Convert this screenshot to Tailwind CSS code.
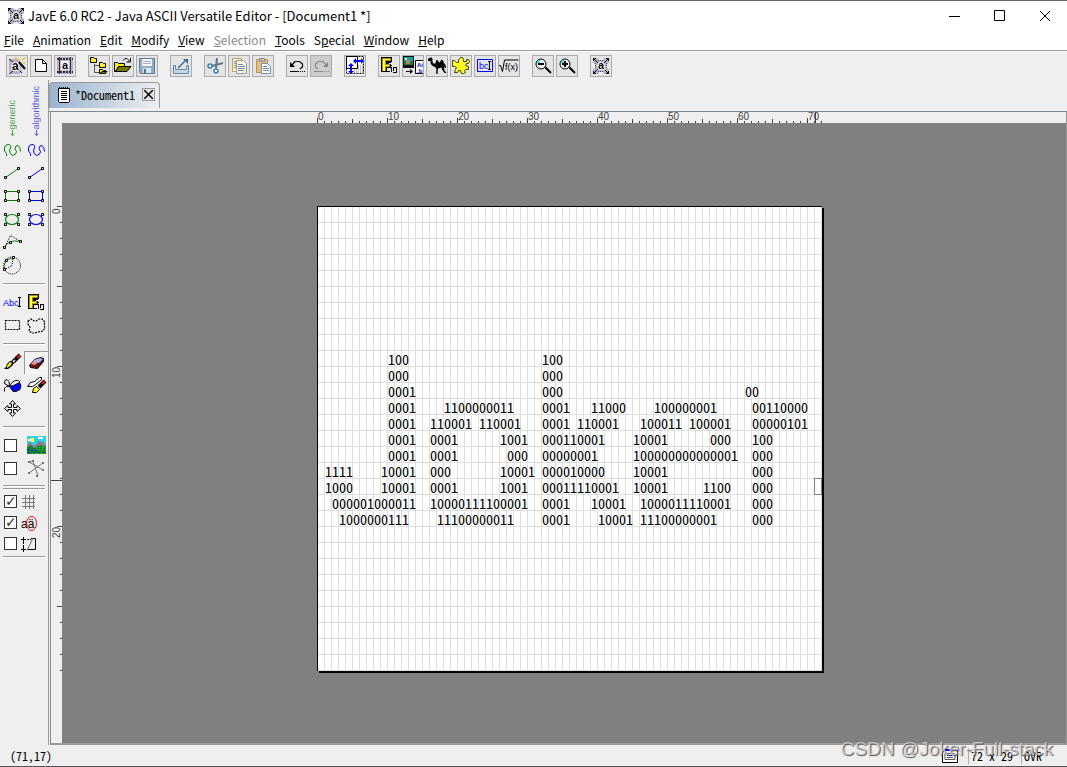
<!DOCTYPE html>
<html lang="en">
<head>
<meta charset="utf-8">
<title>JavE 6.0 RC2</title>
<script src="https://cdn.jsdelivr.net/npm/@tailwindcss/browser@4"></script>
</head>
<body class="flex h-screen flex-col overflow-hidden border-t border-[#666] bg-[#efefef] font-['Noto_Sans_CJK_SC','Noto_Sans',sans-serif] text-black">
<svg class="hidden">
  <symbol id="logo" viewBox="0 0 16 16">
    <path fill="#b7aecb" d="M0 0h16v16H0z"/><path fill="#eee" d="M5 0h6l-1 2H6zM5 16h6l-1-2H6zM0 5l2 1v4l-2 1zM16 5l-2 1v4l2 1z"/>
    <path stroke="#111" fill="none" d="M0 .5h3M.5 0v3M1 1l4 4M16 .5h-3M15.500 0v3M15 1l-4 4M0 15.500h3M.5 16v-3M1 15l4-4M16 15.500h-3M15.500 16v-3M15 15l-4-4"/>
    <path stroke="#555" stroke-dasharray="1 1" d="M5 2.500h6M5 13.500h6M2.500 5v6M13.500 5v6"/>
    <text x="5" y="11" font-family="Liberation Sans" font-weight="bold" font-size="11" stroke="#fff" stroke-width="2" paint-order="stroke">a</text>
  </symbol>
  <symbol id="fig" viewBox="0 0 20 20">
    <g shape-rendering="crispEdges"><path fill="#000" d="M2 1h11v5h-1v1h-2v1h2v4H8v4H2z"/><path fill="#aa8f00" d="M3 2h9v3H7v3h4v3H7v4H3z"/><path fill="#ff4" d="M5 3h6v1H6v5h4v1H6v5H4V3z"/>
    <path fill="#000" d="M8 15h3v1H8zM12 9h1v1h-1zM12 11h1v5h-1zM14 11h4v1h-3v3h2v-3h1v5h-4v-1h3v-1h-3z"/></g>
  </symbol>
  <symbol id="curve" viewBox="0 0 24 23"><path fill="none" stroke="currentColor" d="M6.500 17V14.500L4.500 12V9Q5 5.500 8 5.500Q11.500 5.500 10.500 9L9.500 11Q9.500 15.500 12.500 16.500Q16.500 16 16.500 12.500L15 9.500Q15.500 6 18 6.500Q20.500 8 20.500 12.500"/></symbol>
  <symbol id="line" viewBox="0 0 24 23"><path stroke="currentColor" d="M5.500 15.500L18.500 6.500"/><path fill="#fff" stroke="#000" d="M4.500 14.500h2v2h-2zM17.500 5.500h2v2h-2z"/></symbol>
  <symbol id="rect" viewBox="0 0 24 23"><path fill="none" stroke="currentColor" d="M5.500 6.500h13v9h-13z"/><path fill="#fff" stroke="#000" d="M4.500 5.500h2v2h-2zM17.500 5.500h2v2h-2zM4.500 14.500h2v2h-2zM17.500 14.500h2v2h-2z"/></symbol>
  <symbol id="oval" viewBox="0 0 24 23"><ellipse cx="12" cy="11.500" rx="6.500" ry="5" fill="none" stroke="currentColor" stroke-width="1.200"/><path fill="#fff" stroke="#000" d="M4.500 5.500h2v2h-2zM17.500 5.500h2v2h-2zM4.500 15.500h2v2h-2zM17.500 15.500h2v2h-2z"/></symbol>
  <symbol id="brush" viewBox="0 0 24 23"><path fill="#000" d="M4 18l2-2 1-3 3-3h3l1 2-2 3-4 3z"/><path fill="#ff2" d="M7 15l3-4 2 1-2 3-3 2z"/><path stroke="#000" stroke-width="4" d="M13 11l7-7"/><path stroke="#d22" stroke-width="2" d="M17 7l3-3"/><path stroke="#ccc" stroke-width="2" d="M13 11l2-2"/></symbol>
</svg>

<header class="shrink-0 bg-white">
  <div class="flex h-[30px] items-center pl-2">
    <svg class="size-4" viewBox="0 0 16 16"><use href="#logo"/></svg>
    <h1 class="ml-1 grow text-[13px] leading-5">JavE 6.0 RC2 - Java ASCII Versatile Editor - [Document1 *]</h1>
    <button aria-label="Minimize" class="grid h-full w-[45px] place-items-center"><svg width="12" height="12"><path stroke="#000" d="M0 6.500h11"/></svg></button>
    <button aria-label="Maximize" class="grid h-full w-[45px] place-items-center"><svg width="12" height="12"><path fill="none" stroke="#000" d="M.5 .5h10v10H.5z"/></svg></button>
    <button aria-label="Close" class="grid h-full w-[45px] place-items-center"><svg width="12" height="12"><path stroke="#000" d="M1 1l10 10M11 1L1 11"/></svg></button>
  </div>
  <nav class="flex h-5 items-center gap-[9px] border-b border-[#999] pb-px pl-1 text-xs leading-[18px]">
    <button><u>F</u>ile</button><button><u>A</u>nimation</button><button><u>E</u>dit</button><button><u>M</u>odify</button><button><u>V</u>iew</button><button disabled class="text-[#888]"><u>S</u>election</button><button><u>T</u>ools</button><button>S<u>p</u>ecial</button><button><u>W</u>indow</button><button><u>H</u>elp</button>
  </nav>
</header>

<div class="flex h-[29px] shrink-0 items-center gap-3 border-t border-white pl-1.5 [&_button]:size-[22px] [&_button]:border [&_button]:border-[#aaa] [&_button]:bg-[#e4e4e4] [&_svg]:size-5 [&>div]:flex [&>div]:gap-0.5" role="toolbar">
  <div>
    <button aria-label="Wizard"><svg viewBox="0 0 20 20"><path fill="#b7aecb" d="M2 3h9l3 5 1 9-4 1H3l-1-4z"/><path stroke="#222" d="M2 3l4 3M2 18l4-3M15 17l-3-3" /><text x="5" y="14" font-family="Liberation Sans" font-weight="bold" font-size="12" stroke="#fff" stroke-width="2" paint-order="stroke">a</text><path stroke="#000" stroke-width="2" d="M12 6l6 7"/><path stroke="#e8c020" stroke-width="1.500" d="M11 3l1 2M15 4l3-2M8 2l2 1M16 7h2"/></svg></button>
    <button aria-label="New"><svg viewBox="0 0 20 20"><path fill="#fff" stroke="#000" d="M4.500 3.500h7l4 4v8h-11z"/><path fill="none" stroke="#000" d="M11.500 3.500v4h4"/></svg></button>
    <button aria-label="New animation"><svg viewBox="0 0 20 20"><path fill="#b7aecb" d="M2 1h16v17H2z"/><path stroke="#333" stroke-width="2" stroke-dasharray="2 1" d="M2 3h16M2 16h16"/><path stroke="#333" d="M4.500 1v17M15.500 1v17"/><path fill="#fff" d="M6 5h8v9H6z"/><text x="7" y="13" font-family="Liberation Sans" font-weight="bold" font-size="11">a</text></svg></button>
  </div>
  <div>
    <button aria-label="Browse"><svg viewBox="0 0 20 20"><path fill="none" stroke="#555" d="M5.500 8v8.500H11M5.500 9.500H11"/><path fill="#ffef20" stroke="#000" d="M1.500 1.500h3l1 1h2v4h-6zM10.500 6.500h3l1 1h2v4h-6zM10.500 13.500h3l1 1h2v3h-6z"/><path fill="#777700" stroke="#000" d="M11 17.500l2-2h5l-2 2z"/></svg></button>
    <button aria-label="Open"><svg viewBox="0 0 20 20"><path fill="#ffef20" stroke="#000" d="M1.500 15.500v-9h3l1 1h6v3h-6l-3 5z"/><path fill="#777700" stroke="#000" d="M2 15.500l4-5h12l-4 5z"/><path fill="none" stroke="#000" d="M10 4.500l2-2h2l3 3M17.500 2v4h-4"/></svg></button>
    <button aria-label="Save"><svg viewBox="0 0 20 20"><path fill="#91aac6" stroke="#5d7c9d" d="M2.500 2.500h15v15h-14l-1-1z"/><path fill="#f4f7fa" d="M5 3h10v7H5z"/><path fill="#dce5ed" d="M6 12h8v5H6z"/><path fill="#527294" d="M7 13h2v4H7z"/><path stroke="#aac" d="M6 5.500h8M6 7.500h8"/></svg></button>
  </div>
  <div>
    <button aria-label="Export"><svg viewBox="0 0 20 20"><path fill="#c4d8ea" stroke="#628ab3" d="M2.500 9.500v8h15v-8h-2v4h-11v-4z"/><path fill="none" stroke="#356b9d" stroke-width="1.500" d="M7 12l7-7"/><path fill="#356b9d" d="M12 3h5v5z"/></svg></button>
  </div>
  <div>
    <button aria-label="Cut"><svg viewBox="0 0 20 20"><path stroke="#64788c" stroke-width="2" d="M12 2l-1 10M18 7l-11 3"/><circle cx="5" cy="10" r="2" fill="#fff" stroke="#3b7bb5" stroke-width="1.500"/><circle cx="11" cy="15" r="2" fill="#fff" stroke="#3b7bb5" stroke-width="1.500"/></svg></button>
    <button aria-label="Copy"><svg viewBox="0 0 20 20"><path fill="#fff5c8" stroke="#b8a268" d="M3.500 2.500h9v13h-9z"/><path fill="#fff8d8" stroke="#8b9db3" d="M7.500 4.500h7l3 3v10h-10z"/><path stroke="#758cab" d="M9 8.500h5M9 10.500h7M9 12.500h7M9 14.500h6M5 5.500h2M5 7.500h2M5 9.500h2M5 11.500h2"/></svg></button>
    <button aria-label="Paste"><svg viewBox="0 0 20 20"><path fill="#e7bd7a" stroke="#bd9150" d="M3.500 3.500h11v13h-11z"/><path fill="#b9bdc3" stroke="#878d95" d="M6.500 2.500h5v3h-5z"/><path fill="#fff" stroke="#7890ad" d="M8.500 7.500h6l3 3v7h-9z"/><path stroke="#758cab" d="M10 10.500h4M10 12.500h6M10 14.500h6"/></svg></button>
  </div>
  <div>
    <button aria-label="Undo"><svg viewBox="0 0 20 20"><path fill="none" stroke="#000" stroke-width="1.200" d="M5 9L8 5.500h4.500L15.500 8v3L13 13"/><path d="M3 6v5h5z"/><path stroke="#000" d="M3 15.500h9M13 15.500h1M15 15.500h1M17 15.500h1"/></svg></button>
    <button disabled aria-label="Redo" class="bg-[#ccc]!"><svg viewBox="0 0 20 20"><path fill="none" stroke="#888" stroke-width="1.200" d="M15 9L12 5.500H7.500L4.500 8v3L7 13"/><path fill="#888" d="M17 6v5h-5z"/><path stroke="#888" d="M3 15.500h9M13 15.500h1M15 15.500h1M17 15.500h1"/></svg></button>
  </div>
  <div>
    <button aria-label="Resize"><svg viewBox="0 0 20 20"><path fill="#fff" d="M1 0h18v19H1z"/><path stroke="#bbb" stroke-width="4" stroke-dasharray="1 1" d="M13 11h5M9 15h9"/><path fill="none" stroke="#000" stroke-dasharray="2 1" d="M1.500 .5h17v17h-17z"/><path fill="none" stroke="#000" d="M1.500 .5h11v12h-11z"/><path stroke="#00f" stroke-width="2" d="M10 5h7M6 9v7"/><path fill="#00f" d="M8 5l3-3v6zM19 5l-3-3v6zM6 7l-3 3h6zM6 18l-3-3h6z"/></svg></button>
  </div>
  <div>
    <button aria-label="Figlet"><svg><use href="#fig"/></svg></button>
    <button aria-label="Image to ASCII"><svg viewBox="0 0 20 20"><path fill="#111" d="M0 0h11v12H0z"/><path fill="#18a0b0" d="M1 1h9v4H1z"/><path fill="#287830" d="M1 5h9v4H1z"/><path fill="#9a8a78" d="M3 4h4v4H3z"/><path fill="#ee4" d="M2 2h2v2H2z"/><path stroke="#000" d="M3 15.500h4"/><path d="M7 13v5l3-2.500z"/><path fill="#fff" stroke="#000" d="M20 4.500h-7.500v13H20"/><text x="14" y="11" font-family="Liberation Sans" font-weight="bold" font-size="6" fill="#00f">Ai</text><text x="14" y="17" font-family="Liberation Sans" font-weight="bold" font-size="6" fill="#00f">.b</text></svg></button>
    <button aria-label="Camel"><svg viewBox="0 0 20 20"><path d="M1 3L2 2H3L4 1 5.500 3 5.500 6 7 8 8.500 7 9.500 4 10.500 4 12 6.500 13 6 14.500 3.500 16 4.500 17 7 18.500 9 19 12H18V10.500L17 12 17.500 14.500 19.500 17H17.500L15 13.500 14.500 11.500 11 12.500 10.500 16.500 11.500 17.500H9L9.500 13 8 11 5 9.500 3.500 7 3.500 5H1z"/></svg></button>
    <button aria-label="Puzzle"><svg viewBox="0 0 20 20"><path fill="#ff2" stroke="#443c00" d="M1.500 4.500h2l2 2h2v-3l2-2h2l1 2v2h3v-2h2l1 2-1 2h-2l-1 2 3 1v3h-3l-1 1 1 2-2 1h-2l-1-3h-2l-1 2h-3l1-3 1-2-2-1h-2z"/></svg></button>
    <button aria-label="Text box"><svg viewBox="0 0 20 20"><path fill="#e4e4e4" stroke="#00f" d="M2.500 3.500h15v12h-15z"/><text x="4" y="13" font-family="Liberation Sans" font-size="9" fill="#00f">bc</text><path stroke="#000" d="M14.500 5v9M13 5.500h1M15 5.500h1M13 13.500h1M15 13.500h1"/></svg></button>
    <button aria-label="Formula"><svg viewBox="0 0 20 20"><path fill="none" stroke="#000" d="M0 9.500h1.500l2 6 2-11.500h14"/><text x="6" y="14" font-family="Liberation Sans" font-size="9">f(x)</text></svg></button>
  </div>
  <div>
    <button aria-label="Zoom out"><svg viewBox="0 0 20 20"><path stroke="#000" stroke-width="2" d="M12 11l6 6"/><circle cx="8" cy="8" r="5" fill="#efefef" stroke="#000"/><path stroke="#0dd" stroke-width="1.500" d="M4.500 7L7 4.500"/><path stroke="#000" stroke-width="2" d="M5 8h6"/></svg></button>
    <button aria-label="Zoom in"><svg viewBox="0 0 20 20"><path stroke="#000" stroke-width="2" d="M12 11l6 6"/><circle cx="8" cy="8" r="5" fill="#efefef" stroke="#000"/><path stroke="#0dd" stroke-width="1.500" d="M4.500 7L7 4.500"/><path stroke="#000" stroke-width="2" d="M5 8h6M8 5v6"/></svg></button>
  </div>
  <div>
    <button aria-label="About" class="grid place-items-center"><svg class="size-4!"><use href="#logo"/></svg></button>
  </div>
</div>

<main class="flex min-h-0 grow">
  <aside class="flex w-12 shrink-0 flex-col [&_.icons]:grid [&_.icons]:auto-rows-[23px] [&_.icons]:grid-cols-2 [&_button]:size-full [&_svg]:h-[23px] [&_svg]:w-6 [&_hr]:mx-[3px] [&_hr]:h-0.5 [&_hr]:border-t [&_hr]:border-[#999] [&_hr]:bg-white">
    <div class="grid h-[59px] shrink-0 grid-cols-2 pb-0.5 font-['Liberation_Sans',sans-serif] text-[9px] leading-3">
      <div class="flex flex-col items-center justify-end text-[#4ba54b]"><span class="rotate-180 [writing-mode:vertical-rl]">generic</span><svg class="h-[7px]! w-[5px]! shrink-0"><path fill="none" stroke="currentColor" d="M2.500 0v6M.5 3.500l2 2 2-2"/></svg></div>
      <div class="flex flex-col items-center justify-end text-[#5a5ae0]"><span class="rotate-180 [writing-mode:vertical-rl]">algorithmic</span><svg class="h-[7px]! w-[5px]! shrink-0"><path fill="none" stroke="currentColor" d="M2.500 0v6M.5 3.500l2 2 2-2"/></svg></div>
    </div>
    <div class="icons">
      <button aria-label="Generic curve" class="text-[#008000]"><svg><use href="#curve"/></svg></button><button aria-label="Algorithmic curve" class="text-[#00f]"><svg><use href="#curve"/></svg></button>
      <button aria-label="Generic line" class="text-[#008000]"><svg><use href="#line"/></svg></button><button aria-label="Algorithmic line" class="text-[#00f]"><svg><use href="#line"/></svg></button>
      <button aria-label="Generic rectangle" class="text-[#008000]"><svg><use href="#rect"/></svg></button><button aria-label="Algorithmic rectangle" class="text-[#00f]"><svg><use href="#rect"/></svg></button>
      <button aria-label="Generic ellipse" class="text-[#008000]"><svg><use href="#oval"/></svg></button><button aria-label="Algorithmic ellipse" class="text-[#00f]"><svg><use href="#oval"/></svg></button>
      <button aria-label="Bezier" class="col-start-1"><svg viewBox="0 0 24 23"><path fill="none" stroke="#000" stroke-dasharray="1 1" d="M4.500 16.500l6-12 10 6"/><path fill="none" stroke="#008000" d="M4.500 16.500Q8 8 20.500 10.500"/><path fill="#fff" stroke="#000" d="M3.500 15.500h2v2h-2zM9.500 10.500h2v2h-2zM19.500 9.500h2v2h-2z"/></svg></button>
      <button aria-label="Arc" class="col-start-1"><svg viewBox="0 0 24 23"><circle cx="12" cy="11.500" r="8.500" fill="none" stroke="#000" stroke-dasharray="1 1"/><path fill="none" stroke="#000" stroke-dasharray="1 1" d="M4.500 15.500L12 11.500l1-8"/><path fill="none" stroke="#008000" d="M4.500 15.500Q2 7 13 3.500"/><path fill="#fff" stroke="#000" d="M3.500 14.500h2v2h-2zM5.500 5.500h2v2h-2zM12.500 2.500h2v2h-2z"/></svg></button>
    </div>
    <hr class="mt-1.5 mb-1.5">
    <div class="icons">
      <button aria-label="Text"><svg viewBox="0 0 24 23"><text x="3" y="15" font-family="Liberation Sans" font-size="9" fill="#00f">Abc</text><path stroke="#000" d="M19.500 6v10M18 6.500h1M20 6.500h1M18 15.500h1M20 15.500h1"/></svg></button>
      <button aria-label="Figlet text"><svg viewBox="0 0 24 23"><use href="#fig" x="2" y="2" width="20" height="20"/></svg></button>
      <button aria-label="Select rectangle"><svg viewBox="0 0 24 23"><path fill="none" stroke="#000" stroke-dasharray="2 1" stroke-width="1.200" d="M5.500 6.500h14v9h-14z"/></svg></button>
      <button aria-label="Select free form"><svg viewBox="0 0 24 23"><path fill="none" stroke="#000" stroke-width="1.200" stroke-dasharray="2 1" d="M4 7l3-2 3 2h2l3-2h3l3 3-1 3 1 3-2 3-5 1-3 1H8l-3-2 1-4-2-3z"/></svg></button>
    </div>
    <hr class="my-1.5">
    <div class="icons">
      <button aria-label="Brush"><svg><use href="#brush"/></svg></button>
      <button aria-label="Eraser" class="border-t border-l border-[#999] bg-[#f4f4f4]"><svg viewBox="1 1 24 23"><path fill="#711" stroke="#000" d="M5.500 14.500l5-6 6-2 3 1v3l-6 7-7-1z"/><path fill="#d99" d="M7 13l3-4 5 1-4 4z"/><path fill="#a8b4f0" d="M10 9l6-2 3 1-4 4-5-2z"/><path stroke="#224" stroke-width="1.500" stroke-dasharray="1 1" d="M15 14l4-5"/></svg></button>
      <button aria-label="Fill"><svg viewBox="0 0 24 23"><path fill="#00f" stroke="#111" d="M9.500 12.500l4-1 6-3 1.500 3-1 4-4 2h-3z"/><path fill="none" stroke="#000" d="M4.500 17.500v-3l2-2h3L9 7.500l-2-2-2 1-.5 3 5 3M10 12c1-4 7-8 10-4"/></svg></button>
      <button aria-label="Clone brush"><svg viewBox="0 0 24 23"><path fill="#fff" stroke="#000" d="M3.500 12.500l3-4 4-1 5-4h2v2l-6 5-3 2z"/><path fill="#ff2" stroke="#000" d="M8.500 18.500l1-4 3-2 3 3-3 3z"/><path stroke="#000" stroke-width="4" d="M15 13l6-6"/><path stroke="#d22" stroke-width="2" d="M18 10l3-3"/></svg></button>
      <button aria-label="Move"><svg viewBox="0 0 24 23"><path fill="#fff" stroke="#000" d="M12.500 3.500l3 3.500h-2v3.500H17v-2l3.500 3-3.500 3v-2h-3.500V16h2l-3 3.500-3-3.500h2v-3.500H8v2l-3.500-3 3.500-3v2h3.500V7h-2z"/></svg></button>
    </div>
    <hr class="my-1.5">
    <div class="icons [&_input]:ml-1 [&_input]:size-[13px] [&_input]:appearance-none [&_input]:self-center [&_input]:border [&_input]:border-[#333] [&_input]:bg-white">
      <input id="bg" type="checkbox"><label for="bg" aria-label="Show image"><svg viewBox="0 0 24 23"><path fill="#35cfee" d="M3 2h19v18H3z"/><path fill="#fff" d="M4 5h3v2H4zM14 3h5v2h-5z"/><path fill="#ff3" d="M7 4h3v4H7z"/><path fill="#887f91" d="M3 11l3-3 4 4 5-5 4 1 3 3v4H3z"/><path fill="#16842b" d="M3 13l4-2 3 3 6-3 6 2v7H3z"/><path stroke="#1038c0" stroke-width="2" stroke-dasharray="2 2" d="M3 16h12"/><path stroke="#1038c0" stroke-dasharray="2 3" d="M4 18.500h17"/><path stroke="#3d4" stroke-dasharray="1 2" d="M8 19.500h14M12 15.500h10M12 13.500h8"/></svg></label>
      <input id="vec" type="checkbox"><label for="vec" aria-label="Show lines"><svg viewBox="0 0 24 23"><path fill="none" stroke="#777" d="M5 5l14 8M5 16L19 6M9 4l5 15M5 5l4-1"/><path fill="#777" d="M4 4h2v2H4zM18 5h2v2h-2zM4 15h2v2H4zM18 12h2v2h-2zM8 3h2v2H8zM12 18h2v2h-2z"/></svg></label>
    </div>
    <hr class="mt-[5px] mb-px"><hr>
    <div class="icons auto-rows-[21px]! mt-px [&_svg]:-ml-1 [&_svg]:h-[21px] [&_input]:ml-1 [&_input]:size-[13px] [&_input]:appearance-none [&_input]:self-center [&_input]:border [&_input]:border-[#333] [&_input]:bg-white [&_input:checked]:before:block [&_input:checked]:before:text-center [&_input:checked]:before:font-['DejaVu_Sans',sans-serif] [&_input:checked]:before:text-sm [&_input:checked]:before:leading-[11px] [&_input:checked]:before:text-[#333] [&_input:checked]:before:content-['✓']">
      <input id="grid" type="checkbox" checked><label for="grid" aria-label="Grid"><svg viewBox="0 0 24 21"><path stroke="#777" d="M5.500 3v14M9.500 3v14M13.500 3v14M2 6.500h13M2 10.500h13M2 14.500h13"/></svg></label>
      <input id="uni" type="checkbox" checked><label for="uni" aria-label="Characters"><svg viewBox="0 0 24 21"><text x="1" y="15" font-family="Liberation Sans" font-size="12">aä</text><ellipse cx="11.500" cy="10.500" rx="5" ry="7" fill="none" stroke="#e00"/></svg></label>
      <input id="mix" type="checkbox"><label for="mix" aria-label="Selection outline"><svg viewBox="0 0 24 21"><path fill="none" stroke="#000" d="M1 5.500h5M3.500 3v5M1 15.500h5M3.500 13v5M11 4.500h4.500v11H8"/><path stroke="#000" stroke-dasharray="2 1" d="M3.500 8v5M7 5.500h4"/><path stroke="#666" d="M7 16.500L13 4"/></svg></label>
    </div>
    <hr class="mt-0.5">
  </aside>

  <section class="flex min-w-0 grow flex-col border-l border-[#999]">
    <div class="flex h-8 shrink-0 items-start border-b border-[#7c8a92] pt-0.5">
      <div class="flex h-[26px] w-[111px] items-center rounded-t-sm border border-b-0 border-[#999] bg-linear-to-r from-[#9ab3d0] to-[#efefef] pb-0.5 pl-[7px] font-['Noto_Sans_Mono_CJK_SC','Liberation_Mono',monospace] text-xs leading-4">
        <svg width="14" height="17"><path fill="#fff" stroke="#000" d="M1.500 2.500h11v13l-1 1h-9l-1-1z"/><path stroke="#000" stroke-dasharray="1 1" d="M2 1.500h10"/><path stroke="#000" d="M4 5.500h6M4 7.500h6M4 9.500h6M4 11.500h6M4 13.500h6"/></svg>
        <span class="ml-1">*Document1</span>
        <button aria-label="Close document" class="ml-[7px] grid size-[13px] place-items-center border border-[#999] bg-[#e4e4e4]"><svg width="9" height="9"><path stroke="#000" stroke-width="1.500" d="M0 0l9 9M9 0L0 9"/></svg></button>
      </div>
    </div>
    <div class="ml-px grid min-h-0 grow grid-cols-[11px_1fr] grid-rows-[11px_1fr] border-r border-b-2 border-l border-[#999] border-l-[#7c8a92]">
      <div></div>
      <div class="flex justify-center overflow-hidden pl-[11px]">
        <svg class="h-[11px] w-[505px] shrink-0 overflow-visible" viewBox="0 1 505 11" shape-rendering="crispEdges">
          <defs><pattern id="hx" width="70" height="12" patternUnits="userSpaceOnUse"><path stroke="#444" d="M.5 7v5M7.500 10v2M14.500 10v2M21.500 10v2M28.500 10v2M35.500 8v4M42.500 10v2M49.500 10v2M56.500 10v2M63.500 10v2"/></pattern></defs>
          <path fill="url(#hx)" d="M0 0h505v12H0z"/><path stroke="#444" d="M498.500 1v11"/>
          <g font-family="Liberation Sans" font-size="10" fill="#444"><text x="1" y="9">0</text><text x="71" y="9">10</text><text x="141" y="9">20</text><text x="211" y="9">30</text><text x="281" y="9">40</text><text x="351" y="9">50</text><text x="421" y="9">60</text><text x="491" y="9">70</text></g>
        </svg>
      </div>
      <div class="flex items-center overflow-hidden pt-[11px]">
        <svg class="h-[465px] w-[11px] shrink-0 overflow-visible" viewBox="1 0 11 465" shape-rendering="crispEdges">
          <defs><pattern id="vx" width="12" height="160" patternUnits="userSpaceOnUse"><path stroke="#444" d="M7 .5h5M10 16.500h2M10 32.500h2M10 48.500h2M10 64.500h2M7 80.500h5M10 96.500h2M10 112.500h2M10 128.500h2M10 144.500h2"/></pattern></defs>
          <path fill="url(#vx)" d="M0 0h12v465H0z"/><path stroke="#444" d="M0 274.500h12"/>
          <g font-family="Liberation Sans" font-size="10" fill="#444"><text transform="translate(10 8) rotate(-90)">0</text><text transform="translate(10 172) rotate(-90)">10</text><text transform="translate(10 332) rotate(-90)">20</text></g>
        </svg>
      </div>
      <div class="flex items-center justify-center overflow-hidden bg-[#808080] pt-[11px] pl-[11px]">
        <div class="relative h-[465px] w-[505px] shrink-0 border-t border-l border-black bg-white bg-[linear-gradient(to_left,#dedede_1px,transparent_1px),linear-gradient(to_top,#dedede_1px,transparent_1px)] bg-size-[7px_16px] pt-[144px] shadow-[2px_2px_0_#000]">
<pre class="font-['Noto_Sans_Mono_CJK_SC','Liberation_Mono',monospace] text-sm leading-4">          100                   100
          000                   000
          0001                  000                          00
          0001    1100000011    0001   11000    100000001     00110000
          0001  110001 110001   0001 110001   100011 100001   00000101
          0001  0001      1001  000110001    10001      000   100
          0001  0001       000  00000001     100000000000001  000
 1111    10001  000       10001 000010000    10001            000
 1000    10001  0001      1001  00011110001  10001     1100   000
  000001000011  10000111100001  0001   10001  1000011110001   000
   1000000111    11100000011    0001    10001 11100000001     000</pre>
          <span class="absolute top-[271px] right-0 h-[17px] w-2 border border-[#808080]"></span>
        </div>
      </div>
    </div>
  </section>
</main>

<footer class="relative flex h-[22px] shrink-0 items-center border-b border-[#555] pr-[25px] pl-[10px] font-['Noto_Sans_Mono_CJK_SC','Liberation_Mono',monospace] text-xs leading-4">
  <span class="grow">(71,17)</span>
  <svg width="16" height="14"><path fill="#fff" stroke="#000" d="M.5 1.500h15v12H.5z"/><path stroke="#00f" stroke-width="2" d="M0 1h16"/><path fill="none" stroke="#555" d="M3 4.500h10v6H3zM5 8.500h6"/><path stroke="#00f" d="M5 6.500h5"/></svg>
  <span class="ml-2.5 border-l border-[#aaa] pl-0.5">72 x 29</span>
  <span class="ml-2 border-l border-[#aaa] pl-0.5">OVR</span>
  <span class="pointer-events-none absolute right-[14px] bottom-[5px] font-['Liberation_Sans',sans-serif] text-[19px] leading-6 whitespace-nowrap text-[#e4e4e4]/70 [text-shadow:1px_1px_1px_#555]">CSDN @Joker-Full-stack</span>
</footer>
</body>
</html>
